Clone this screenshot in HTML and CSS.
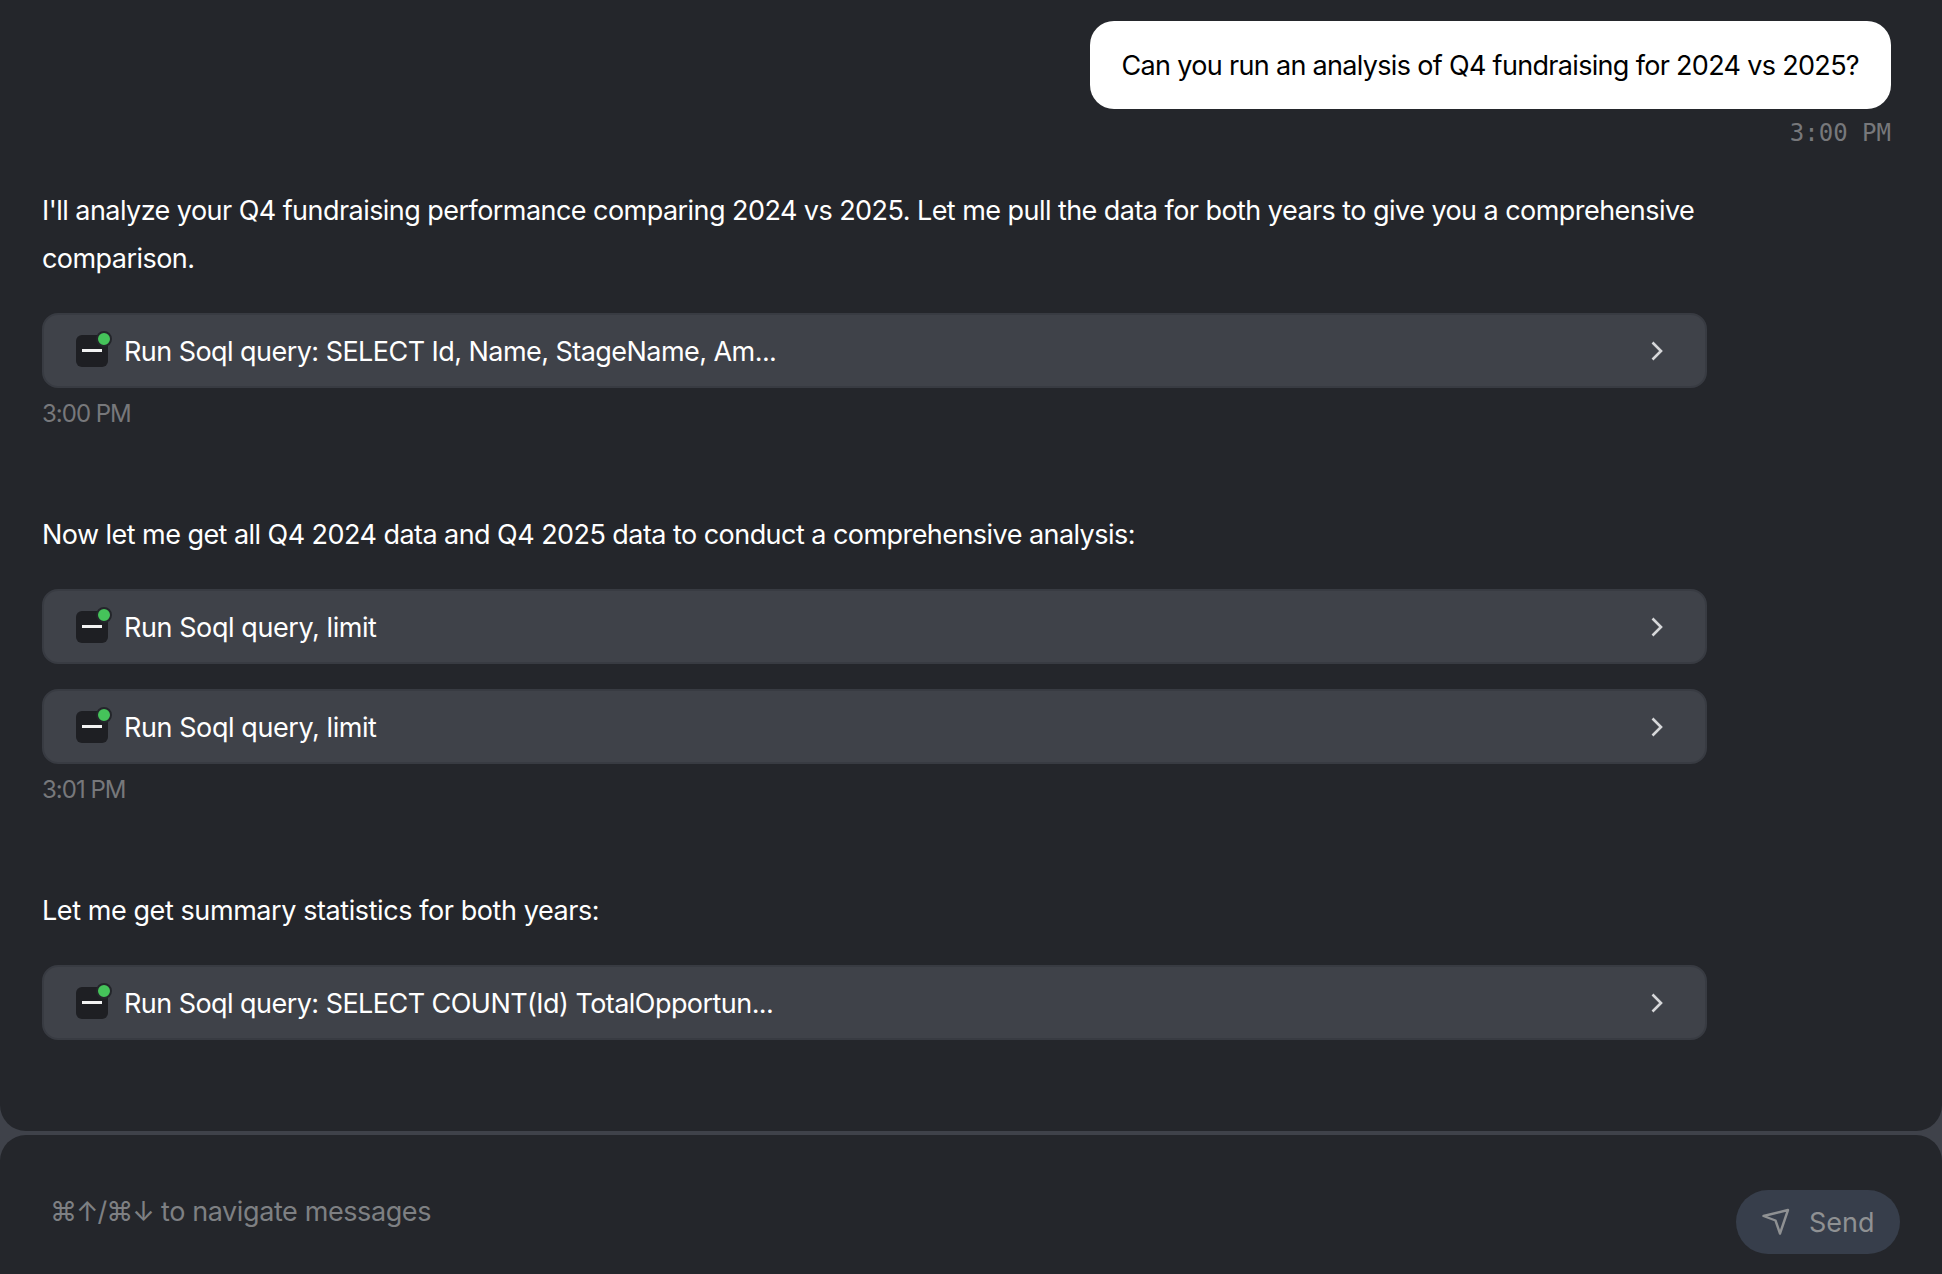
FILE: index.html
```html
<!DOCTYPE html>
<html lang="en">
<head>
<meta charset="utf-8">
<title>Chat</title>
<link rel="stylesheet" href="styles.css">
</head>
<body>
<div class="app">
  <main class="thread">
    <div class="user-msg">
      <div class="bubble">Can you run an analysis of Q4 fundraising for 2024 vs 2025?</div>
      <div class="user-time">3:00 PM</div>
    </div>

    <section class="turn turn-first">
      <p class="text">I'll analyze your Q4 fundraising performance comparing 2024 vs 2025. Let me pull the data for both years to give you a comprehensive comparison.</p>
      <div class="tools">
        <div class="tool">
          <span class="tool-icon"><span class="dash"></span><span class="dot"></span></span>
          <span class="tool-label">Run Soql query: SELECT Id, Name, StageName, Am...</span>
          <svg class="chev" viewBox="0 0 12 20"><path d="M1.5 1.5 10 10l-8.500 8.500"/></svg>
        </div>
      </div>
      <div class="time">3:00 PM</div>
    </section>

    <section class="turn">
      <p class="text">Now let me get all Q4 2024 data and Q4 2025 data to conduct a comprehensive analysis:</p>
      <div class="tools">
        <div class="tool">
          <span class="tool-icon"><span class="dash"></span><span class="dot"></span></span>
          <span class="tool-label wide">Run Soql query, limit</span>
          <svg class="chev" viewBox="0 0 12 20"><path d="M1.5 1.5 10 10l-8.500 8.500"/></svg>
        </div>
        <div class="tool">
          <span class="tool-icon"><span class="dash"></span><span class="dot"></span></span>
          <span class="tool-label wide">Run Soql query, limit</span>
          <svg class="chev" viewBox="0 0 12 20"><path d="M1.5 1.5 10 10l-8.500 8.500"/></svg>
        </div>
      </div>
      <div class="time">3:01 PM</div>
    </section>

    <section class="turn">
      <p class="text wide">Let me get summary statistics for both years:</p>
      <div class="tools">
        <div class="tool">
          <span class="tool-icon"><span class="dash"></span><span class="dot"></span></span>
          <span class="tool-label">Run Soql query: SELECT COUNT(Id) TotalOpportun...</span>
          <svg class="chev" viewBox="0 0 12 20"><path d="M1.5 1.5 10 10l-8.500 8.500"/></svg>
        </div>
      </div>
    </section>
  </main>

  <footer class="composer">
    <div class="placeholder"><span class="keys">⌘↑/⌘↓</span> to navigate messages</div>
    <button class="send" type="button">
      <svg class="send-icon" viewBox="0 0 28 28"><path d="M1.500 8 26 2 18 25.500 13.500 12.500Z"/></svg>
      <span>Send</span>
    </button>
  </footer>
</div>
</body>
</html>
```
FILE: styles.css
```css
* { box-sizing: border-box; }
html, body { margin: 0; height: 100%; }
body {
  background: #3f424a;
  font-family: Inter, "Liberation Sans", sans-serif;
  font-size: 27px;
  letter-spacing: -0.55px;
  overflow: hidden;
}
.app {
  display: flex;
  flex-direction: column;
  gap: 4px;
  height: 1274px;
}
.thread {
  height: 1131px;
  background: #24262b;
  border-radius: 0 0 26px 26px;
  padding: 21px 51px 0 42px;
  color: #fff;
}
.user-msg {
  display: flex;
  flex-direction: column;
  align-items: flex-end;
}
.bubble {
  height: 88px;
  padding: 0 32px;
  display: flex;
  align-items: center;
  background: #fff;
  color: #000;
  border-radius: 24px;
  letter-spacing: -0.68px;
}
.user-time {
  margin-top: 10px;
  font-family: "DejaVu Sans Mono", monospace;
  font-size: 24px;
  line-height: 28px;
  letter-spacing: 0;
  color: #77787b;
}
.turn { width: 1665px; margin-top: 82px; }
.turn-first { margin-top: 40px; }
.text {
  margin: 0;
  line-height: 48px;
}
.wide { letter-spacing: -0.42px; }
.tools {
  margin-top: 30px;
  display: flex;
  flex-direction: column;
  gap: 25px;
}
.tool {
  height: 75px;
  display: flex;
  align-items: center;
  padding: 0 38px 0 32px;
  background: #3f4249;
  border: 2px solid #383b42;
  border-radius: 16px;
}
.tool-icon {
  position: relative;
  flex: none;
  width: 32px;
  height: 32px;
  display: flex;
  align-items: center;
  justify-content: center;
  background: #1e1f23;
  border-radius: 6px;
}
.dash {
  width: 20px;
  height: 3px;
  background: #f2f2f2;
}
.dot {
  position: absolute;
  top: -4px;
  right: -4px;
  width: 16px;
  height: 16px;
  background: #45c35a;
  border: 2px solid #24262b;
  border-radius: 50%;
}
.tool-label {
  flex: 1;
  margin-top: 2px;
  margin-left: 16px;
}
.chev {
  flex: none;
  width: 12px;
  height: 20px;
  margin-right: 4px;
  fill: none;
  stroke: #d6d7d9;
  stroke-width: 2.600;
}
.time {
  margin-top: 11px;
  font-size: 24px;
  line-height: 30px;
  letter-spacing: -1px;
  color: #77787b;
}
.composer {
  flex: 1;
  display: flex;
  justify-content: space-between;
  background: #24262b;
  border-radius: 26px 26px 0 0;
  padding: 0 42px 0 50px;
}
.placeholder {
  margin-top: 61px;
  line-height: 32px;
  letter-spacing: -0.4px;
  color: #7e8083;
}
.keys { letter-spacing: -1px; }
.send {
  align-self: flex-start;
  margin-top: 55px;
  width: 164px;
  height: 64px;
  display: flex;
  align-items: center;
  gap: 19px;
  padding: 0 0 0 26px;
  border: 0;
  border-radius: 32px;
  background: #373e4b;
  color: #8f9193;
  font: inherit;
  letter-spacing: 0;
}
.send-icon {
  flex: none;
  width: 28px;
  height: 28px;
  fill: none;
  stroke: #8f9193;
  stroke-width: 2.400;
  stroke-linejoin: round;
}
```
